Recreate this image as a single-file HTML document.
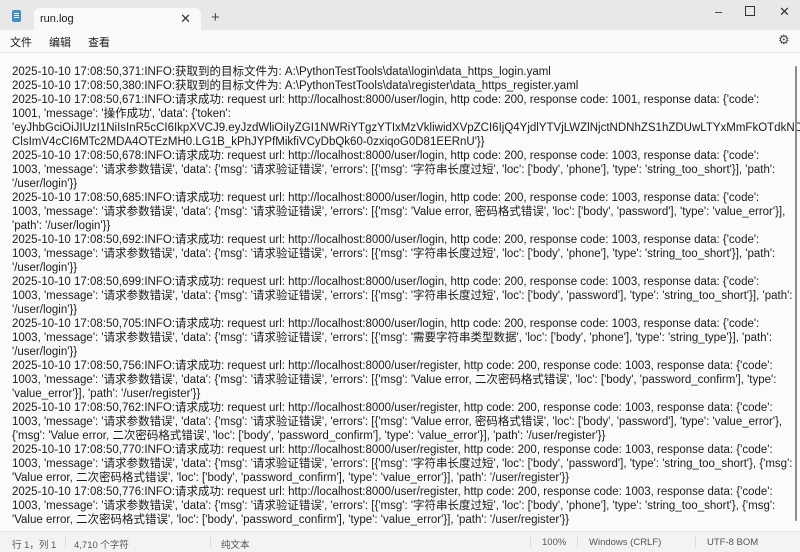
<!DOCTYPE html>
<html><head><meta charset="utf-8"><style>
*{margin:0;padding:0;box-sizing:border-box}
body{width:800px;height:552px;overflow:hidden;background:#fbfbfb;font-family:"Liberation Sans","Noto Sans CJK SC",sans-serif;color:#1b1b1b;position:relative}
.title{position:absolute;left:0;top:0;width:800px;height:30px;background:#e8e8e8}
.tab{position:absolute;left:34px;top:8px;width:167px;height:22px;background:#f9f9f9;border-radius:6px 6px 0 0;font-size:11px;padding:5px 0 0 6px}
.tab .x{position:absolute;right:10px;top:3px;font-size:13px;color:#333}
.plus{position:absolute;left:211px;top:9px;font-size:15px;color:#444}
.ico{position:absolute;left:12px;top:10px;width:9px;height:12px;background:#3d8fd0;border-radius:2px}
.ico:before{content:"";position:absolute;left:2px;top:3px;width:5px;height:1px;background:#fff;box-shadow:0 2px #fff,0 4px #fff}
.wc{position:absolute;top:4px;font-size:13px;color:#333}
.menu{position:absolute;left:0;top:30px;width:800px;height:23px;background:#f9f9f9;border-bottom:1px solid #e5e5e5;font-size:11px}
.menu span{position:absolute;top:4px}
.text{position:absolute;left:12px;top:65px;font-size:11.5px;line-height:14px;white-space:nowrap}
.sb{position:absolute;left:795px;top:66px;width:2px;height:455px;background:#8a8a8a;border-radius:1px}
.status{position:absolute;left:0;top:531px;width:800px;height:21px;background:#f3f3f3;border-top:1px solid #e5e5e5;font-size:9.5px;color:#555}
.status span{position:absolute;top:5px}
.sep{position:absolute;top:4px;width:1px;height:12px;background:#ddd}
</style></head><body>
<div class="title">
<div class="ico"></div>
<div class="tab">run.log<span class="x">✕</span></div>
<div class="plus">+</div>
<div class="wc" style="left:715px">–</div>
<div class="wc" style="left:745px;top:6px;width:10px;height:10px;border:1px solid #333"></div>
<div class="wc" style="left:779px">✕</div>
</div>
<div class="menu"><span style="left:10px">文件</span><span style="left:49px">编辑</span><span style="left:88px">查看</span><span style="left:778px;top:2px;font-size:13px;color:#444">⚙</span></div>
<div class="text">
<div>2025-10-10 17:08:50,371:INFO:获取到的目标文件为: A:\PythonTestTools\data\login\data_https_login.yaml</div>
<div>2025-10-10 17:08:50,380:INFO:获取到的目标文件为: A:\PythonTestTools\data\register\data_https_register.yaml</div>
<div>2025-10-10 17:08:50,671:INFO:请求成功: request url: http://localhost:8000/user/login, http code: 200, response code: 1001, response data: {'code':</div>
<div>1001, 'message': '操作成功', 'data': {'token':</div>
<div>'eyJhbGciOiJIUzI1NiIsInR5cCI6IkpXVCJ9.eyJzdWliOiIyZGI1NWRiYTgzYTIxMzVkliwidXVpZCI6IjQ4YjdlYTVjLWZlNjctNDNhZS1hZDUwLTYxMmFkOTdkNDFlN</div>
<div>ClsImV4cCI6MTc2MDA4OTEzMH0.LG1B_kPhJYPfMikfiVCyDbQk60-0zxiqoG0D81EERnU'}}</div>
<div>2025-10-10 17:08:50,678:INFO:请求成功: request url: http://localhost:8000/user/login, http code: 200, response code: 1003, response data: {'code':</div>
<div>1003, 'message': '请求参数错误', 'data': {'msg': '请求验证错误', 'errors': [{'msg': '字符串长度过短', 'loc': ['body', 'phone'], 'type': 'string_too_short'}], 'path':</div>
<div>'/user/login'}}</div>
<div>2025-10-10 17:08:50,685:INFO:请求成功: request url: http://localhost:8000/user/login, http code: 200, response code: 1003, response data: {'code':</div>
<div>1003, 'message': '请求参数错误', 'data': {'msg': '请求验证错误', 'errors': [{'msg': 'Value error, 密码格式错误', 'loc': ['body', 'password'], 'type': 'value_error'}],</div>
<div>'path': '/user/login'}}</div>
<div>2025-10-10 17:08:50,692:INFO:请求成功: request url: http://localhost:8000/user/login, http code: 200, response code: 1003, response data: {'code':</div>
<div>1003, 'message': '请求参数错误', 'data': {'msg': '请求验证错误', 'errors': [{'msg': '字符串长度过短', 'loc': ['body', 'phone'], 'type': 'string_too_short'}], 'path':</div>
<div>'/user/login'}}</div>
<div>2025-10-10 17:08:50,699:INFO:请求成功: request url: http://localhost:8000/user/login, http code: 200, response code: 1003, response data: {'code':</div>
<div>1003, 'message': '请求参数错误', 'data': {'msg': '请求验证错误', 'errors': [{'msg': '字符串长度过短', 'loc': ['body', 'password'], 'type': 'string_too_short'}], 'path':</div>
<div>'/user/login'}}</div>
<div>2025-10-10 17:08:50,705:INFO:请求成功: request url: http://localhost:8000/user/login, http code: 200, response code: 1003, response data: {'code':</div>
<div>1003, 'message': '请求参数错误', 'data': {'msg': '请求验证错误', 'errors': [{'msg': '需要字符串类型数据', 'loc': ['body', 'phone'], 'type': 'string_type'}], 'path':</div>
<div>'/user/login'}}</div>
<div>2025-10-10 17:08:50,756:INFO:请求成功: request url: http://localhost:8000/user/register, http code: 200, response code: 1003, response data: {'code':</div>
<div>1003, 'message': '请求参数错误', 'data': {'msg': '请求验证错误', 'errors': [{'msg': 'Value error, 二次密码格式错误', 'loc': ['body', 'password_confirm'], 'type':</div>
<div>'value_error'}], 'path': '/user/register'}}</div>
<div>2025-10-10 17:08:50,762:INFO:请求成功: request url: http://localhost:8000/user/register, http code: 200, response code: 1003, response data: {'code':</div>
<div>1003, 'message': '请求参数错误', 'data': {'msg': '请求验证错误', 'errors': [{'msg': 'Value error, 密码格式错误', 'loc': ['body', 'password'], 'type': 'value_error'},</div>
<div>{'msg': 'Value error, 二次密码格式错误', 'loc': ['body', 'password_confirm'], 'type': 'value_error'}], 'path': '/user/register'}}</div>
<div>2025-10-10 17:08:50,770:INFO:请求成功: request url: http://localhost:8000/user/register, http code: 200, response code: 1003, response data: {'code':</div>
<div>1003, 'message': '请求参数错误', 'data': {'msg': '请求验证错误', 'errors': [{'msg': '字符串长度过短', 'loc': ['body', 'password'], 'type': 'string_too_short'}, {'msg':</div>
<div>'Value error, 二次密码格式错误', 'loc': ['body', 'password_confirm'], 'type': 'value_error'}], 'path': '/user/register'}}</div>
<div>2025-10-10 17:08:50,776:INFO:请求成功: request url: http://localhost:8000/user/register, http code: 200, response code: 1003, response data: {'code':</div>
<div>1003, 'message': '请求参数错误', 'data': {'msg': '请求验证错误', 'errors': [{'msg': '字符串长度过短', 'loc': ['body', 'phone'], 'type': 'string_too_short'}, {'msg':</div>
<div>'Value error, 二次密码格式错误', 'loc': ['body', 'password_confirm'], 'type': 'value_error'}], 'path': '/user/register'}}</div>
</div>
<div class="sb"></div>
<div class="status">
<span style="left:12px">行 1，列 1</span><div class="sep" style="left:65px"></div>
<span style="left:74px">4,710 个字符</span><div class="sep" style="left:210px"></div>
<span style="left:221px">纯文本</span><div class="sep" style="left:530px"></div>
<span style="left:542px">100%</span><div class="sep" style="left:577px"></div>
<span style="left:589px">Windows (CRLF)</span><div class="sep" style="left:695px"></div>
<span style="left:707px">UTF-8 BOM</span>
</div>
</body></html>
